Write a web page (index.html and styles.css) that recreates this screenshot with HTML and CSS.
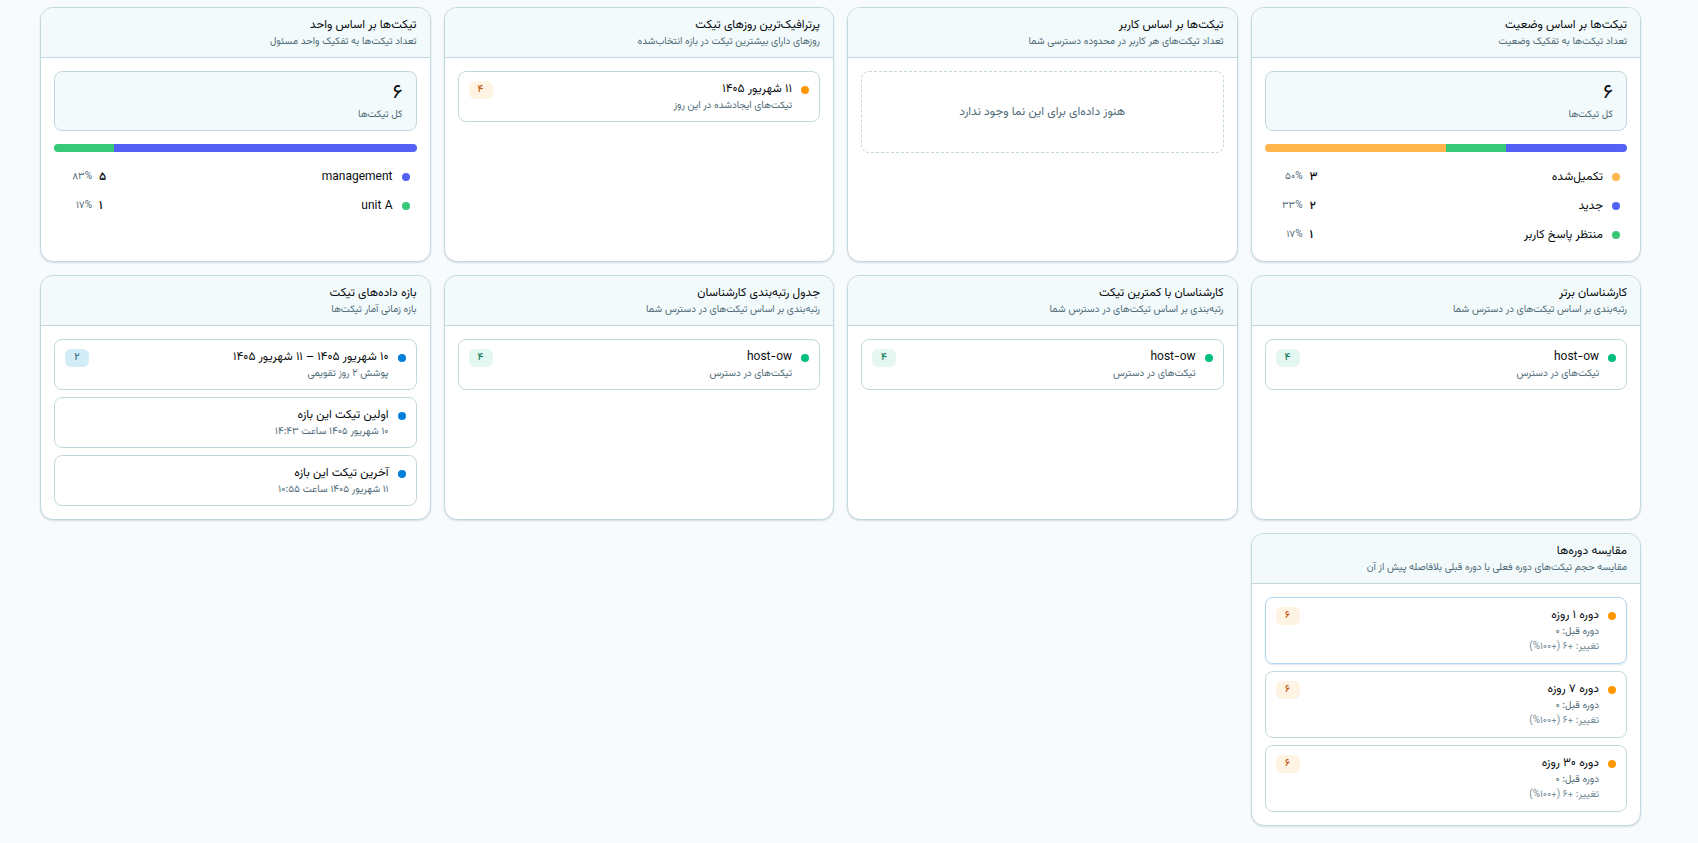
FILE: index.html
```html
<!DOCTYPE html>
<html lang="fa" dir="rtl">
<head>
<meta charset="utf-8">
<title>آمار تیکت‌ها</title>
<link rel="stylesheet" href="styles.css">
</head>
<body>
<main class="grid">
  <section class="card">
    <header class="card-head"><h2 class="title">تیکت‌ها بر اساس وضعیت</h2><p class="sub">تعداد تیکت‌ها به تفکیک وضعیت</p></header>
    <div class="card-body">
      <div class="total"><strong class="total-num">۶</strong><span class="sub">کل تیکت‌ها</span></div>
      <div class="bar"><span class="seg indigo" style="width:33.33%"></span><span class="seg green" style="width:16.67%"></span><span class="seg amber" style="width:50%"></span></div>
      <ul class="legend">
        <li class="legend-row"><span class="dot amber"></span><span class="name">تکمیل‌شده</span><b class="count">۳</b><span class="pct">۵۰%</span></li>
        <li class="legend-row"><span class="dot indigo"></span><span class="name">جدید</span><b class="count">۲</b><span class="pct">۳۳%</span></li>
        <li class="legend-row"><span class="dot green"></span><span class="name">منتظر پاسخ کاربر</span><b class="count">۱</b><span class="pct">۱۷%</span></li>
      </ul>
    </div>
  </section>
  <section class="card">
    <header class="card-head"><h2 class="title">تیکت‌ها بر اساس کاربر</h2><p class="sub">تعداد تیکت‌های هر کاربر در محدوده دسترسی شما</p></header>
    <div class="card-body"><p class="empty">هنوز داده‌ای برای این نما وجود ندارد</p></div>
  </section>
  <section class="card">
    <header class="card-head"><h2 class="title">پرترافیک‌ترین روزهای تیکت</h2><p class="sub">روزهای دارای بیشترین تیکت در بازه انتخاب‌شده</p></header>
    <div class="card-body">
      <ul class="items">
        <li class="item"><span class="dot orange"></span><div class="item-text"><h3 class="title">۱۱ شهریور ۱۴۰۵</h3><p class="sub">تیکت‌های ایجادشده در این روز</p></div><span class="badge badge-orange">۴</span></li>
      </ul>
    </div>
  </section>
  <section class="card">
    <header class="card-head"><h2 class="title">تیکت‌ها بر اساس واحد</h2><p class="sub">تعداد تیکت‌ها به تفکیک واحد مسئول</p></header>
    <div class="card-body">
      <div class="total"><strong class="total-num">۶</strong><span class="sub">کل تیکت‌ها</span></div>
      <div class="bar"><span class="seg indigo" style="width:83.33%"></span><span class="seg green" style="width:16.67%"></span></div>
      <ul class="legend">
        <li class="legend-row"><span class="dot indigo"></span><span class="name">management</span><b class="count">۵</b><span class="pct">۸۳%</span></li>
        <li class="legend-row"><span class="dot green"></span><span class="name">unit A</span><b class="count">۱</b><span class="pct">۱۷%</span></li>
      </ul>
    </div>
  </section>

  <section class="card">
    <header class="card-head"><h2 class="title">کارشناسان برتر</h2><p class="sub">رتبه‌بندی بر اساس تیکت‌های در دسترس شما</p></header>
    <div class="card-body">
      <ul class="items">
        <li class="item"><span class="dot emerald"></span><div class="item-text"><h3 class="title">host-ow</h3><p class="sub">تیکت‌های در دسترس</p></div><span class="badge badge-green">۴</span></li>
      </ul>
    </div>
  </section>
  <section class="card">
    <header class="card-head"><h2 class="title">کارشناسان با کمترین تیکت</h2><p class="sub">رتبه‌بندی بر اساس تیکت‌های در دسترس شما</p></header>
    <div class="card-body">
      <ul class="items">
        <li class="item"><span class="dot emerald"></span><div class="item-text"><h3 class="title">host-ow</h3><p class="sub">تیکت‌های در دسترس</p></div><span class="badge badge-green">۴</span></li>
      </ul>
    </div>
  </section>
  <section class="card">
    <header class="card-head"><h2 class="title">جدول رتبه‌بندی کارشناسان</h2><p class="sub">رتبه‌بندی بر اساس تیکت‌های در دسترس شما</p></header>
    <div class="card-body">
      <ul class="items">
        <li class="item"><span class="dot emerald"></span><div class="item-text"><h3 class="title">host-ow</h3><p class="sub">تیکت‌های در دسترس</p></div><span class="badge badge-green">۴</span></li>
      </ul>
    </div>
  </section>
  <section class="card">
    <header class="card-head"><h2 class="title">بازه داده‌های تیکت</h2><p class="sub">بازه زمانی آمار تیکت‌ها</p></header>
    <div class="card-body">
      <ul class="items">
        <li class="item"><span class="dot blue"></span><div class="item-text"><h3 class="title">۱۰ شهریور ۱۴۰۵ – ۱۱ شهریور ۱۴۰۵</h3><p class="sub">پوشش ۲ روز تقویمی</p></div><span class="badge badge-blue">۲</span></li>
        <li class="item"><span class="dot blue"></span><div class="item-text"><h3 class="title">اولین تیکت این بازه</h3><p class="sub">۱۰ شهریور ۱۴۰۵ ساعت ۱۴:۴۳</p></div></li>
        <li class="item"><span class="dot blue"></span><div class="item-text"><h3 class="title">آخرین تیکت این بازه</h3><p class="sub">۱۱ شهریور ۱۴۰۵ ساعت ۱۰:۵۵</p></div></li>
      </ul>
    </div>
  </section>

  <section class="card">
    <header class="card-head"><h2 class="title">مقایسه دوره‌ها</h2><p class="sub">مقایسه حجم تیکت‌های دوره فعلی با دوره قبلی بلافاصله پیش از آن</p></header>
    <div class="card-body">
      <ul class="items">
        <li class="item item-active"><span class="dot orange"></span><div class="item-text"><h3 class="title">دوره ۱ روزه</h3><p class="sub">دوره قبل: ۰</p><p class="sub note">تغییر: +۶ (+۱۰۰%)</p></div><span class="badge badge-orange">۶</span></li>
        <li class="item"><span class="dot orange"></span><div class="item-text"><h3 class="title">دوره ۷ روزه</h3><p class="sub">دوره قبل: ۰</p><p class="sub note">تغییر: +۶ (+۱۰۰%)</p></div><span class="badge badge-orange">۶</span></li>
        <li class="item"><span class="dot orange"></span><div class="item-text"><h3 class="title">دوره ۳۰ روزه</h3><p class="sub">دوره قبل: ۰</p><p class="sub note">تغییر: +۶ (+۱۰۰%)</p></div><span class="badge badge-orange">۶</span></li>
      </ul>
    </div>
  </section>
</main>
</body>
</html>
```
FILE: styles.css
```css
* { box-sizing: border-box; margin: 0; padding: 0; }
body {
  background: #f7fbfc;
  color: #080c0e;
  font-family: Vazirmatn, Roboto, "DejaVu Sans", sans-serif;
  font-size: 12px;
  line-height: 18px;
}
ul { list-style: none; }
.grid {
  display: grid;
  grid-template-columns: repeat(4, minmax(0, 1fr));
  gap: 13px;
  padding: 7px 57px 16px 40px;
}
.card {
  background: #fff;
  border: 1px solid #c3d8de;
  border-radius: 13px;
  box-shadow: 0 1px 2px rgba(20, 60, 75, 0.14);
  overflow: hidden;
}
.card-head {
  background: #f2fafc;
  border-bottom: 1px solid #c3d8de;
  padding: 8px 13px;
}
.title { font-size: 12px; font-weight: 400; line-height: 18px; }
.sub { color: #506b77; font-size: 10px; line-height: 15px; }
.card-body { padding: 13px; }
.total {
  display: flex;
  flex-direction: column;
  background: #f2fafc;
  border: 1px solid #c3d8de;
  border-radius: 8px;
  padding: 8px 13px;
}
.total-num { font-size: 20px; font-weight: 400; line-height: 27px; }
.bar {
  display: flex;
  height: 8px;
  margin: 13px 0 12px;
  border-radius: 4px;
  overflow: hidden;
}
.legend { display: grid; gap: 3px; }
.legend-row {
  display: flex;
  align-items: center;
  gap: 7px;
  min-height: 26px;
  padding: 0 7px;
}
.name { flex: 1; padding-inline-start: 2px; }
.count { font-weight: 500; }
.pct { width: 31px; color: #506b77; font-size: 10px; }
.dot { flex: none; width: 8px; height: 8px; border-radius: 50%; }
.amber { background: #ffb74d; }
.indigo { background: #5560f5; }
.green { background: #37c978; }
.orange { background: #ff9800; }
.emerald { background: #00bf80; }
.blue { background: #0080db; }
.empty {
  display: flex;
  align-items: center;
  justify-content: center;
  min-height: 82px;
  border: 1px dashed #c3d8de;
  border-radius: 8px;
  color: #506b77;
}
.items { display: grid; gap: 7px; }
.item {
  display: flex;
  align-items: flex-start;
  gap: 9px;
  border: 1px solid #c3d8de;
  border-radius: 8px;
  padding: 8px 10px;
}
.item-active { border-color: #b0d8f3; box-shadow: 0 1px 2px rgba(20, 60, 75, 0.14); }
.item .dot { margin-top: 6px; }
.item-text { flex: 1; }
.item .note { color: #748c97; line-height: 16px; }
.badge {
  min-width: 24px;
  margin-top: 1px;
  border-radius: 6px;
  padding: 0 8px;
  font-size: 10px;
  font-weight: 500;
  line-height: 18px;
  text-align: center;
}
.badge-orange { background: #fff4e3; color: #c25a10; }
.badge-green { background: #e4f8f1; color: #16805c; }
.badge-blue { background: #d3edf7; color: #3b7187; }
```
